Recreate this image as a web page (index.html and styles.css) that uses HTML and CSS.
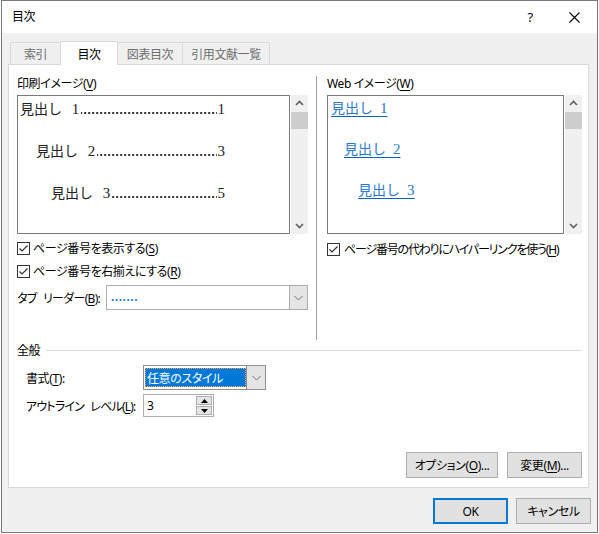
FILE: index.html
```html
<!DOCTYPE html>
<html lang="ja">
<head>
<meta charset="utf-8">
<title>目次</title>
<link rel="stylesheet" href="styles.css">
</head>
<body>
<div class="window">
  <div class="titlebar">
    <span class="title">目次</span>
    <div class="caption">
      <span class="cbtn help">?</span>
      <span class="cbtn close"><svg width="11" height="11" viewBox="0 0 11 11"><path d="M0.5 0.5L10.5 10.5M10.5 0.5L0.5 10.5" stroke="#000" stroke-width="1.1" fill="none"/></svg></span>
    </div>
  </div>

  <div class="tabs">
    <div class="tab t1">索引</div>
    <div class="tab t2 sel">目次</div>
    <div class="tab t3">図表目次</div>
    <div class="tab t4">引用文献一覧</div>
  </div>

  <div class="panel">
    <div class="top">
      <div class="col left">
        <div class="label">印刷イメージ(<u>V</u>)</div>
        <div class="pv-wrap">
          <div class="preview print">
            <div class="pline"><span class="ptext">見出し&ensp;&thinsp;<span class="dg">1</span></span><span class="lead"></span><span class="pnum">1</span></div>
            <div class="pline lv2"><span class="ptext">見出し&ensp;&thinsp;<span class="dg">2</span></span><span class="lead"></span><span class="pnum">3</span></div>
            <div class="pline lv3"><span class="ptext">見出し&ensp;&thinsp;<span class="dg">3</span></span><span class="lead"></span><span class="pnum">5</span></div>
          </div>
          <div class="scrollbar">
            <div class="sb-arrow"><svg width="17" height="17" viewBox="0 0 17 17"><polyline points="5,10 8.5,6.5 12,10" fill="none" stroke="#606060" stroke-width="1.6"/></svg></div>
            <div class="sb-thumb"></div>
            <div class="sb-space"></div>
            <div class="sb-arrow"><svg width="17" height="17" viewBox="0 0 17 17"><polyline points="5,7 8.5,10.5 12,7" fill="none" stroke="#606060" stroke-width="1.6"/></svg></div>
          </div>
        </div>
        <div class="check c1"><span class="cb"><svg width="11" height="11" viewBox="0 0 11 11"><polyline points="1.5,5.5 4,8 9.5,2.5" fill="none" stroke="#333" stroke-width="1.2"/></svg></span>ページ番号を表示する(<u>S</u>)</div>
        <div class="check c2"><span class="cb"><svg width="11" height="11" viewBox="0 0 11 11"><polyline points="1.5,5.5 4,8 9.5,2.5" fill="none" stroke="#333" stroke-width="1.2"/></svg></span>ページ番号を右揃えにする(<u>R</u>)</div>
        <div class="leader-row">
          <span class="leader-label">タブ リーダー(<u>B</u>):</span>
          <div class="select leader">
            <span class="val">.......</span>
            <span class="dd"><svg width="9" height="6" viewBox="0 0 9 6"><polyline points="0.5,1 4.5,5 8.5,1" fill="none" stroke="#707070" stroke-width="1"/></svg></span>
          </div>
        </div>
      </div>
      <div class="sep"></div>
      <div class="col right">
        <div class="label">Web イメージ(<u>W</u>)</div>
        <div class="pv-wrap">
          <div class="preview web">
            <div class="wline"><span class="link">見出し&ensp;<span class="dg">1</span></span></div>
            <div class="wline lv2"><span class="link">見出し&ensp;<span class="dg">2</span></span></div>
            <div class="wline lv3"><span class="link">見出し&ensp;<span class="dg">3</span></span></div>
          </div>
          <div class="scrollbar">
            <div class="sb-arrow"><svg width="17" height="17" viewBox="0 0 17 17"><polyline points="5,10 8.5,6.5 12,10" fill="none" stroke="#606060" stroke-width="1.6"/></svg></div>
            <div class="sb-thumb"></div>
            <div class="sb-space"></div>
            <div class="sb-arrow"><svg width="17" height="17" viewBox="0 0 17 17"><polyline points="5,7 8.5,10.5 12,7" fill="none" stroke="#606060" stroke-width="1.6"/></svg></div>
          </div>
        </div>
        <div class="check c3"><span class="cb"><svg width="11" height="11" viewBox="0 0 11 11"><polyline points="1.5,5.5 4,8 9.5,2.5" fill="none" stroke="#333" stroke-width="1.2"/></svg></span><span class="tighter">ページ番号の代わりにハイパーリンクを使う(<u>H</u>)</span></div>
      </div>
    </div>

    <div class="general-head"><span>全般</span><span class="rule"></span></div>
    <div class="frow r1">
      <span class="flabel">書式(<u>T</u>):</span>
      <div class="select fmt">
        <span class="hl">任意のスタイル</span>
        <span class="dd"><svg width="9" height="6" viewBox="0 0 9 6"><polyline points="0.5,1 4.5,5 8.5,1" fill="none" stroke="#707070" stroke-width="1"/></svg></span>
      </div>
    </div>
    <div class="frow r2">
      <span class="flabel tight">アウトライン レベル(<u>L</u>):</span>
      <div class="spin">
        <span class="spin-val">3</span>
        <div class="spin-btns">
          <span class="sbtn"><svg width="7" height="4" viewBox="0 0 7 4"><polygon points="0,4 3.5,0 7,4" fill="#000"/></svg></span>
          <span class="sbtn"><svg width="7" height="4" viewBox="0 0 7 4"><polygon points="0,0 3.5,4 7,0" fill="#000"/></svg></span>
        </div>
      </div>
    </div>

    <div class="panel-btns">
      <div class="btn opt">オプション(<u>O</u>)...</div>
      <div class="btn mod">変更(<u>M</u>)...</div>
    </div>
  </div>

  <div class="dlg-btns">
    <div class="btn ok">OK</div>
    <div class="btn cancel">キャンセル</div>
  </div>
</div>
</body>
</html>
```

FILE: styles.css
```css
body {
  margin: 0;
  background: #ffffff;
  font-family: "Noto Sans", "Noto Sans CJK JP", sans-serif;
  font-size: 12px;
  color: #000;
  font-feature-settings: "palt";
  letter-spacing: -0.4px;
}

u { text-decoration: underline; text-underline-offset: 2px; }

.tight { letter-spacing: -0.8px; word-spacing: 4px; }
.tighter { letter-spacing: -1.2px; }

.window {
  margin-left: 1px;
  width: 597px;
  height: 533px;
  box-sizing: border-box;
  border: 1px solid #7a7a7a;
  background: #f0f0f0;
  display: flex;
  flex-direction: column;
}

.titlebar {
  height: 32px;
  background: #fff;
  display: flex;
  align-items: center;
}
.title { padding-left: 10px; line-height: 16px; }
.caption { margin-left: auto; display: flex; height: 32px; }
.cbtn {
  width: 46px;
  display: flex;
  align-items: center;
  justify-content: center;
}
.help { padding-left: 4px; box-sizing: border-box; font-size: 13px; }

.tabs {
  height: 31px;
  display: flex;
  align-items: flex-end;
  padding-left: 8px;
}
.tab {
  height: 22px;
  box-sizing: border-box;
  border: 1px solid #d9d9d9;
  border-bottom: none;
  margin-left: -1px;
  display: flex;
  align-items: center;
  justify-content: center;
  color: #6d6d6d;
  background: #f0f0f0;
  padding-top: 1px;
}
.tab.t1 { margin-left: 0; width: 51px; }
.tab.t2 { width: 58px; }
.tab.t3 { width: 66px; }
.tab.t4 { width: 88px; }
.tab.sel {
  height: 24px;
  background: #fff;
  color: #000;
  margin-bottom: -1px;
  position: relative;
  z-index: 1;
}

.panel {
  margin-left: 6px;
  width: 581px;
  height: 424px;
  box-sizing: border-box;
  border: 1px solid #d9d9d9;
  background: #fff;
  display: flex;
  flex-direction: column;
  padding: 11px 6px 9px 8px;
}

.top { display: flex; height: 264px; }
.col.left { width: 291px; }
.sep { width: 1px; background: #a0a0a0; margin-left: 8px; }
.col.right { margin-left: 10px; width: 256px; }

.label { height: 16px; line-height: 16px; }

.pv-wrap { display: flex; gap: 1px; margin-top: 3px; height: 139px; }
.preview {
  flex: 1;
  box-sizing: border-box;
  border: 1px solid #7a7a7a;
  background: #fff;
  min-width: 0;
}
.scrollbar {
  width: 17px;
  background: #f0f0f0;
  display: flex;
  flex-direction: column;
}
.sb-arrow { height: 17px; display: flex; align-items: center; justify-content: center; }
.sb-thumb { height: 17px; background: #cdcdcd; }
.sb-space { flex: 1; }

.print {
  padding: 3px 0 0 2px;
  font-family: "Liberation Serif", "Noto Sans CJK JP", serif;
  font-size: 14px;
  color: #222;
  letter-spacing: 0;
}
.print .ptext, .web .link { font-feature-settings: normal; }
.dg { font-size: 15px; }
.pline {
  width: 205px;
  height: 42px;
  line-height: 20px;
  display: flex;
  align-items: flex-start;
  box-sizing: border-box;
}
.pline.lv2 { padding-left: 16px; }
.pline.lv3 { padding-left: 31px; }
.ptext { white-space: nowrap; }
.lead {
  flex: 1;
  min-width: 0;
  height: 20px;
  margin: 0 1px 0 2px;
  background-image: linear-gradient(to right, #333 1.6px, transparent 1.6px);
  background-size: 4px 1.6px;
  background-repeat: repeat-x;
  background-position: right bottom 5px;
}
.pnum { white-space: nowrap; font-size: 15px; }

.web {
  padding: 2px 0 0 3px;
  font-family: "Liberation Serif", "Noto Sans CJK JP", serif;
  font-size: 14px;
  letter-spacing: 0;
}
.wline { height: 41px; line-height: 20px; }
.wline.lv2 { padding-left: 13px; }
.wline.lv3 { padding-left: 27px; }
.link {
  color: #2a7ad2;
  text-decoration: underline;
  text-decoration-color: #0563c1;
  text-underline-offset: 3px;
}

.check {
  display: flex;
  align-items: center;
  height: 20px;
  white-space: nowrap;
}
.check.c1 { margin-top: 4px; }
.check.c2 { margin-top: 3px; }
.check.c3 { margin-top: 5px; }
.cb {
  width: 13px;
  height: 13px;
  box-sizing: border-box;
  border: 1px solid #333;
  background: #fff;
  display: flex;
  align-items: center;
  justify-content: center;
  margin-right: 3px;
}
.check.c3 .cb { margin-right: 4px; }

.leader-row {
  display: flex;
  align-items: center;
  margin-top: 4px;
  height: 25px;
}
.leader-label { width: 89px; white-space: nowrap; letter-spacing: -0.7px; word-spacing: 4px; }

.select {
  box-sizing: border-box;
  height: 25px;
  border: 1px solid #adadad;
  background: #fff;
  display: flex;
}
.select.leader { width: 202px; }
.select .val {
  flex: 1;
  padding-left: 4px;
  display: flex;
  align-items: center;
  color: #1a6fc9;
  font-weight: bold;
  letter-spacing: 0.5px;
  padding-bottom: 3px;
}
.select .dd {
  width: 17px;
  background: #e5e5e5;
  border-left: 1px solid #adadad;
  display: flex;
  align-items: center;
  justify-content: center;
}

.general-head {
  display: flex;
  align-items: center;
  margin-top: 3px;
  height: 16px;
  line-height: 16px;
}
.rule { flex: 1; height: 1px; background: #dcdcdc; margin-left: 6px; margin-top: -1px; }

.frow { display: flex; align-items: center; padding-left: 9px; }
.frow.r1 { margin-top: 6px; height: 25px; }
.frow.r2 { margin-top: 4px; height: 23px; }
.flabel { width: 117px; white-space: nowrap; }

.select.fmt { width: 123px; border-color: #8f8f8f; }
.hl {
  flex: 1;
  margin: 2px 0 2px 1px;
  background: #0078d7;
  color: #fff;
  outline: 1px dotted #f3a64f;
  outline-offset: -1px;
  padding-left: 2px;
  display: flex;
  align-items: center;
}
.select.fmt .dd { width: 18px; border-left-color: #8f8f8f; }

.spin {
  width: 71px;
  height: 23px;
  box-sizing: border-box;
  border: 1px solid #adadad;
  background: #fff;
  display: flex;
  align-items: center;
}
.spin-val { flex: 1; padding-left: 3px; }
.spin-btns {
  width: 16px;
  height: 19px;
  margin-right: 1px;
  display: flex;
  flex-direction: column;
  gap: 1px;
}
.sbtn {
  flex: 1;
  box-sizing: border-box;
  border: 1px solid #adadad;
  background: #e5e5e5;
  display: flex;
  align-items: center;
  justify-content: center;
}

.panel-btns {
  margin-top: auto;
  display: flex;
  justify-content: flex-end;
  gap: 9px;
}
.btn {
  height: 26px;
  box-sizing: border-box;
  border: 1px solid #adadad;
  background: #e1e1e1;
  display: flex;
  align-items: center;
  justify-content: center;
  white-space: nowrap;
}
.btn.opt { width: 92px; }
.btn.mod { width: 75px; }

.dlg-btns {
  display: flex;
  justify-content: flex-end;
  gap: 8px;
  margin-top: 10px;
  padding-right: 6px;
}
.btn.ok { width: 75px; border: 2px solid #0078d7; }
.btn.cancel { width: 75px; }
```
